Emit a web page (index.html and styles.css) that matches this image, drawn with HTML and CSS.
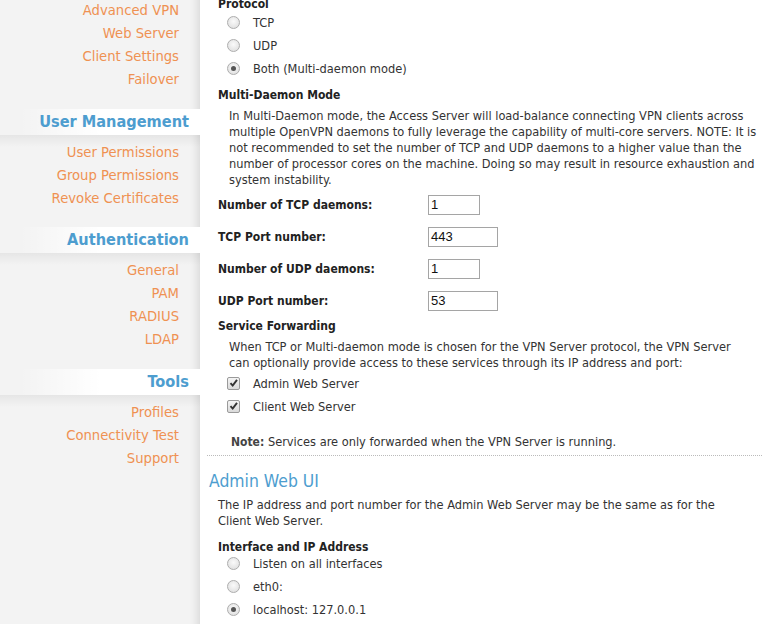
FILE: index.html
```html
<!DOCTYPE html>
<html>
<head>
<meta charset="utf-8">
<link rel="stylesheet" href="styles.css">
</head>
<body>
<div class="layout">
  <aside class="sidebar">
    <ul class="nav nav-first">
      <li><a>Advanced VPN</a></li>
      <li><a>Web Server</a></li>
      <li><a>Client Settings</a></li>
      <li><a>Failover</a></li>
    </ul>
    <h3 class="nav-head">User Management</h3>
    <ul class="nav">
      <li><a>User Permissions</a></li>
      <li><a>Group Permissions</a></li>
      <li><a>Revoke Certificates</a></li>
    </ul>
    <h3 class="nav-head">Authentication</h3>
    <ul class="nav">
      <li><a>General</a></li>
      <li><a>PAM</a></li>
      <li><a>RADIUS</a></li>
      <li><a>LDAP</a></li>
    </ul>
    <h3 class="nav-head">Tools</h3>
    <ul class="nav">
      <li><a>Profiles</a></li>
      <li><a>Connectivity Test</a></li>
      <li><a>Support</a></li>
    </ul>
  </aside>
  <main class="main">
    <div class="group">
      <div class="label">Protocol</div>
      <div class="choices">
        <label class="choice"><span class="radio"></span>TCP</label>
        <label class="choice"><span class="radio"></span>UDP</label>
        <label class="choice"><span class="radio checked"></span>Both (Multi-daemon mode)</label>
      </div>
    </div>
    <div class="group gap-md">
      <div class="label">Multi-Daemon Mode</div>
      <p class="desc">In Multi-Daemon mode, the Access Server will load-balance connecting VPN clients across multiple OpenVPN daemons to fully leverage the capability of multi-core servers. NOTE: It is not recommended to set the number of TCP and UDP daemons to a higher value than the number of processor cores on the machine. Doing so may result in resource exhaustion and system instability.</p>
    </div>
    <div class="group fields">
      <div class="field-label">Number of TCP daemons:</div>
      <div><span class="input short">1</span></div>
      <div class="field-label">TCP Port number:</div>
      <div><span class="input long">443</span></div>
      <div class="field-label">Number of UDP daemons:</div>
      <div><span class="input short">1</span></div>
      <div class="field-label">UDP Port number:</div>
      <div><span class="input long">53</span></div>
    </div>
    <div class="group gap-sf">
      <div class="label">Service Forwarding</div>
      <p class="desc narrow">When TCP or Multi-daemon mode is chosen for the VPN Server protocol, the VPN Server can optionally provide access to these services through its IP address and port:</p>
      <div class="choices checks">
        <label class="choice"><span class="check"><svg viewBox="0 0 12 12" width="12" height="12"><path d="M2.6 6.2 L4.9 8.7 L9.4 2.8" fill="none" stroke="#333" stroke-width="2"/></svg></span>Admin Web Server</label>
        <label class="choice"><span class="check"><svg viewBox="0 0 12 12" width="12" height="12"><path d="M2.6 6.2 L4.9 8.7 L9.4 2.8" fill="none" stroke="#333" stroke-width="2"/></svg></span>Client Web Server</label>
      </div>
      <p class="note"><b>Note:</b> Services are only forwarded when the VPN Server is running.</p>
    </div>
    <section class="section">
      <h2 class="section-title">Admin Web UI</h2>
      <div class="group">
        <p class="plain">The IP address and port number for the Admin Web Server may be the same as for the Client Web Server.</p>
      </div>
      <div class="group gap-if">
        <div class="label">Interface and IP Address</div>
        <div class="choices tight">
          <label class="choice"><span class="radio"></span>Listen on all interfaces</label>
          <label class="choice"><span class="radio"></span>eth0:</label>
          <label class="choice"><span class="radio checked"></span>localhost: 127.0.0.1</label>
        </div>
      </div>
    </section>
  </main>
</div>
</body>
</html>
```

FILE: styles.css
```css
html, body {
  margin: 0;
  padding: 0;
  background: #fff;
  overflow: hidden;
}
body {
  font-family: "DejaVu Sans Condensed", "DejaVu Sans", sans-serif;
  font-size: 12.7px;
  color: #333;
}
.layout {
  display: flex;
  margin-top: -8px;
  min-height: 640px;
}
.sidebar {
  width: 200px;
  flex: none;
  background: #f3f3f3;
  box-shadow: inset -10px 0 10px -8px rgba(0,0,0,0.12);
  font-family: "DejaVu Sans", sans-serif;
}
.nav {
  list-style: none;
  margin: 0;
  padding: 6px 0 17.5px;
  background: linear-gradient(to bottom, rgba(0,0,0,0.055) 0, rgba(0,0,0,0) 12px);
}
.nav-first {
  background: none;
  padding-top: 7px;
}
.nav li {
  height: 23px;
  line-height: 23px;
  text-align: right;
  padding-right: 21px;
}
.nav a {
  color: #ef9152;
  font-size: 13.2px;
}
.nav-head {
  margin: 0;
  height: 26px;
  line-height: 26px;
  text-align: right;
  padding-right: 11px;
  font-family: "DejaVu Sans Condensed", "DejaVu Sans", sans-serif;
  font-size: 16.2px;
  font-weight: bold;
  color: #4d9dcf;
  background: linear-gradient(to right, rgba(255,255,255,0) 20px, #fff 100px);
}
.main {
  flex: 1;
  padding: 5px 12px 0 7px;
}
.group {
  padding-left: 11px;
}
.label {
  font-weight: bold;
  font-size: 12px;
  line-height: 14px;
  color: #222;
}
.choices {
  display: flex;
  flex-direction: column;
  gap: 3px;
  padding-left: 9px;
  margin-top: 1px;
}
.choices.tight { margin-top: -1px; }
.choice {
  display: flex;
  align-items: center;
  height: 20px;
  gap: 13px;
}
.radio {
  width: 11px;
  height: 11px;
  border-radius: 50%;
  border: 1px solid #adadad;
  background: radial-gradient(circle at 50% 40%, #fafafa 0, #e4e4e4 70%);
  position: relative;
  flex: none;
}
.radio.checked::after {
  content: "";
  position: absolute;
  left: 3px;
  top: 3px;
  width: 5px;
  height: 5px;
  border-radius: 50%;
  background: #555;
}
.check {
  width: 11px;
  height: 11px;
  border: 1px solid #9a9a9a;
  border-radius: 2px;
  background: linear-gradient(#f4f4f4, #dadada);
  display: flex;
  flex: none;
}
.check svg { display: block; margin: -1px 0 0 -0.5px; }
.gap-md { margin-top: 9px; }
.gap-md .label { line-height: 16px; }
.desc {
  margin: 5px 0 0;
  padding-left: 11px;
  line-height: 16px;
}
.desc.narrow { max-width: 520px; }
.fields {
  display: grid;
  grid-template-columns: 210px auto;
  row-gap: 12px;
  margin-top: 7px;
}
.field-label {
  font-weight: bold;
  font-size: 12px;
  color: #222;
  line-height: 20px;
}
.input {
  display: block;
  height: 18px;
  line-height: 18px;
  border: 1px solid #a5a5a5;
  padding: 0 2px;
  font-family: "Liberation Sans", Arial, sans-serif;
  font-size: 13px;
  color: #111;
  box-sizing: content-box;
}
.input.short { width: 46px; }
.input.long { width: 64px; }
.gap-sf { margin-top: 7px; }
.gap-sf > .label { line-height: 16px; }
.checks { margin-top: 2px; }
.note {
  margin: 18px 0 0;
  padding-left: 13px;
  line-height: 16px;
}
.note b { color: #444; font-size: 12px; }
.section {
  margin-top: 5px;
  border-top: 1px dotted #bbb;
}
.section-title {
  margin: 14px 0 0;
  padding-left: 2px;
  font-size: 17.4px;
  font-weight: normal;
  line-height: 22px;
  color: #4d9dcf;
}
.plain {
  margin: 5px 0 0;
  line-height: 16px;
  max-width: 520px;
}
.gap-if { margin-top: 11px; }
```
